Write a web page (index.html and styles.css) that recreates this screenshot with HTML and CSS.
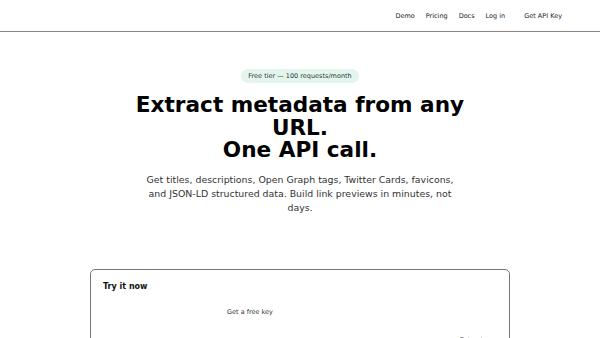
FILE: index.html
```html
<!DOCTYPE html>
<html lang="en">
<head>
  <meta charset="UTF-8">
  <title>Metadata API</title>
  <link rel="stylesheet" href="styles.css">
</head>
<body>
  <!-- Top bar -->
  <header class="topbar">
    <nav class="nav-menu">
      <a href="#demo" class="nav-link">Demo</a>
      <a href="#pricing" class="nav-link">Pricing</a>
      <a href="#docs" class="nav-link">Docs</a>
      <a href="#login" class="nav-link">Log in</a>
      <a href="#signup" class="nav-link nav-cta">Get API Key</a>
    </nav>
  </header>

  <!-- Hero -->
  <section class="hero">
    <span class="badge">Free tier — 100 requests/month</span>
    <h1>Extract metadata from any URL.<br>One API call.</h1>
    <p class="lead">Get titles, descriptions, Open Graph tags, Twitter Cards, favicons, and JSON-LD structured data. Build link previews in minutes, not days.</p>
  </section>

  <!-- Demo card -->
  <section class="demo-card" id="demo">
    <h3>Try it now</h3>
    <div class="demo-row">
      <a href="#signup" class="key-link">Get a free key</a>
    </div>
    <div class="demo-actions">
      <button class="btn">Extract</button>
    </div>
  </section>
</body>
</html>
```

FILE: styles.css
```css
body {
  font-family: "DejaVu Sans", Verdana, sans-serif;
  margin: 0;
  color: #111;
  background: #fff;
}
.topbar {
  height: 31px;
  border-bottom: 1px solid #888;
  display: flex;
  align-items: center;
  justify-content: flex-end;
  padding: 0 38px 0 0;
}
.nav-menu {
  display: flex;
  gap: 11px;
  align-items: center;
}
.nav-link {
  font-size: 6.5px;
  color: #222;
  text-decoration: none;
}
.nav-cta {
  margin-left: 8px;
}
.hero {
  text-align: center;
  padding: 37px 20px 0;
  display: flex;
  flex-direction: column;
  align-items: center;
}
.badge {
  font-size: 6.5px;
  background-color: #e3f6ee;
  color: #333;
  padding: 3px 7px;
  border-radius: 10px;
}
h1 {
  font-size: 21.6px;
  line-height: 1.05;
  margin: 11px 0 0;
  max-width: 360px;
  font-weight: bold;
  color: #000;
}
.lead {
  font-size: 9.4px;
  line-height: 1.5;
  color: #333;
  max-width: 312px;
  margin: 11px 0 0;
}
.demo-card {
  width: 420px;
  margin: 54px auto 0;
  border: 1px solid #777;
  border-radius: 5px;
  padding: 12px 12px 20px;
  box-sizing: border-box;
}
.demo-card h3 {
  font-size: 8px;
  margin: 0;
}
.demo-row {
  padding: 8px 0 0 124px;
}
.key-link {
  font-size: 6.5px;
  color: #333;
  text-decoration: none;
}
.demo-actions {
  display: flex;
  justify-content: flex-end;
  padding: 18px 14px 0 0;
}
.btn {
  font-family: inherit;
  font-size: 6.5px;
  background: none;
  border: none;
  color: #333;
  padding: 0;
}
```
